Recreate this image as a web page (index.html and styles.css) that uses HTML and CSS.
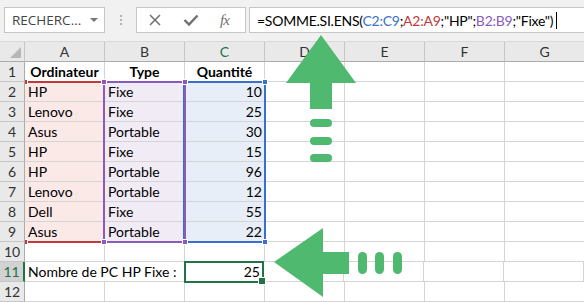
FILE: index.html
```html
<!DOCTYPE html>
<html lang="fr">
<head>
  <meta charset="UTF-8">
  <title>SOMME.SI.ENS</title>
  <link rel="stylesheet" href="styles.css">
</head>
<body>
  <div class="app">
    <div class="toolbar">
      <div class="name-box">
        <span class="name-text">RECHERC...</span>
        <span class="name-drop"></span>
      </div>
      <div class="grip"><i></i><i></i><i></i></div>
      <div class="fx-box">
        <svg class="fx-icon" width="14" height="14" viewBox="0 0 14 14">
          <path d="M2 2 L12 12 M12 2 L2 12" stroke="#707070" stroke-width="1.5" fill="none"/>
        </svg>
        <svg class="fx-icon" width="16" height="14" viewBox="0 0 16 14">
          <path d="M1.5 7 L6 11.5 L14.5 2.5" stroke="#707070" stroke-width="2.4" fill="none"/>
        </svg>
        <span class="fx-label">fx</span>
      </div>
      <div class="formula-box">
        <span class="formula">=SOMME.SI.ENS(<span class="ref-c-text">C2:C9</span>;<span class="ref-a-text">A2:A9</span>;"HP";<span class="ref-b-text">B2:B9</span>;"Fixe")</span><span class="caret"></span>
      </div>
    </div>

    <div class="sheet">
      <div class="row head">
        <div class="corner"><span class="corner-tri"></span></div>
        <div class="col-h">A</div>
        <div class="col-h">B</div>
        <div class="col-h active">C</div>
        <div class="col-h">D</div>
        <div class="col-h">E</div>
        <div class="col-h">F</div>
        <div class="col-h">G</div>
      </div>
      <div class="row">
        <div class="row-h">1</div>
        <div class="cell bold center">Ordinateur</div>
        <div class="cell bold center">Type</div>
        <div class="cell bold center">Quantité</div>
        <div class="cell"></div><div class="cell"></div><div class="cell"></div><div class="cell"></div>
      </div>
      <div class="row">
        <div class="row-h">2</div>
        <div class="cell ref-a">HP</div>
        <div class="cell ref-b">Fixe</div>
        <div class="cell ref-c num">10</div>
        <div class="cell"></div><div class="cell"></div><div class="cell"></div><div class="cell"></div>
      </div>
      <div class="row">
        <div class="row-h">3</div>
        <div class="cell ref-a">Lenovo</div>
        <div class="cell ref-b">Fixe</div>
        <div class="cell ref-c num">25</div>
        <div class="cell"></div><div class="cell"></div><div class="cell"></div><div class="cell"></div>
      </div>
      <div class="row">
        <div class="row-h">4</div>
        <div class="cell ref-a">Asus</div>
        <div class="cell ref-b">Portable</div>
        <div class="cell ref-c num">30</div>
        <div class="cell"></div><div class="cell"></div><div class="cell"></div><div class="cell"></div>
      </div>
      <div class="row">
        <div class="row-h">5</div>
        <div class="cell ref-a">HP</div>
        <div class="cell ref-b">Fixe</div>
        <div class="cell ref-c num">15</div>
        <div class="cell"></div><div class="cell"></div><div class="cell"></div><div class="cell"></div>
      </div>
      <div class="row">
        <div class="row-h">6</div>
        <div class="cell ref-a">HP</div>
        <div class="cell ref-b">Portable</div>
        <div class="cell ref-c num">96</div>
        <div class="cell"></div><div class="cell"></div><div class="cell"></div><div class="cell"></div>
      </div>
      <div class="row">
        <div class="row-h">7</div>
        <div class="cell ref-a">Lenovo</div>
        <div class="cell ref-b">Portable</div>
        <div class="cell ref-c num">12</div>
        <div class="cell"></div><div class="cell"></div><div class="cell"></div><div class="cell"></div>
      </div>
      <div class="row">
        <div class="row-h">8</div>
        <div class="cell ref-a">Dell</div>
        <div class="cell ref-b">Fixe</div>
        <div class="cell ref-c num">55</div>
        <div class="cell"></div><div class="cell"></div><div class="cell"></div><div class="cell"></div>
      </div>
      <div class="row">
        <div class="row-h">9</div>
        <div class="cell ref-a">Asus</div>
        <div class="cell ref-b">Portable</div>
        <div class="cell ref-c num">22</div>
        <div class="cell"></div><div class="cell"></div><div class="cell"></div><div class="cell"></div>
      </div>
      <div class="row">
        <div class="row-h">10</div>
        <div class="cell"></div><div class="cell"></div><div class="cell"></div><div class="cell"></div>
        <div class="cell"></div><div class="cell"></div><div class="cell"></div>
      </div>
      <div class="row">
        <div class="row-h active">11</div>
        <div class="cell wide">Nombre de PC HP Fixe :</div>
        <div class="cell num selected">25</div>
        <div class="cell"></div><div class="cell"></div><div class="cell"></div><div class="cell"></div>
      </div>
      <div class="row">
        <div class="row-h">12</div>
        <div class="cell"></div><div class="cell"></div><div class="cell"></div><div class="cell"></div>
        <div class="cell"></div><div class="cell"></div><div class="cell"></div>
      </div>

      <!-- formula reference frames -->
      <div class="range range-a"><i class="knob k-tl"></i><i class="knob k-bl"></i></div>
      <div class="range range-c"><i class="knob k-tr"></i><i class="knob k-br"></i></div>
      <div class="range range-b"><i class="knob k-tl"></i><i class="knob k-tr"></i><i class="knob k-bl"></i><i class="knob k-br"></i></div>
    </div>

    <svg class="arrows" width="584" height="302" viewBox="0 0 584 302">
      <polygon points="321,35 356,83 332,83 332,109 310,109 310,83 286,83"/>
      <rect x="310" y="119" width="22" height="8" rx="4"/>
      <rect x="310" y="137" width="22" height="8" rx="4"/>
      <rect x="310" y="154" width="22" height="8" rx="4"/>
      <polygon points="274,262 323,228 323,252 349,252 349,274 323,274 323,297"/>
      <rect x="358" y="252" width="9" height="22" rx="4.5"/>
      <rect x="375" y="252" width="9" height="22" rx="4.5"/>
      <rect x="393" y="252" width="9" height="22" rx="4.5"/>
    </svg>
  </div>
</body>
</html>
```

FILE: styles.css
```css
* {
  margin: 0;
  padding: 0;
  box-sizing: border-box;
}

:root {
  --grid: #d4d4d4;
  --head-bg: #e9e9e9;
  --head-active: #d2d2d2;
  --green: #217346;
  --ref-a: #c0393b;
  --ref-b: #8a5bbf;
  --ref-c: #3a6fcb;
}

body {
  font-family: 'Lato', 'Liberation Sans', sans-serif;
  font-size: 14px;
  color: #000;
  background: #fff;
  width: 584px;
  height: 302px;
  overflow: hidden;
}

.app {
  position: relative;
  width: 584px;
  height: 302px;
}

/* Formula bar */
.toolbar {
  height: 42px;
  background: #f1f1f1;
  display: flex;
  align-items: flex-start;
  padding: 7px 0 0 4px;
  border-bottom: 1px solid #d8d8d8;
}

.name-box {
  width: 101px;
  flex: 0 0 101px;
  height: 26px;
  background: #fff;
  border: 1px solid #c6c6c6;
  display: flex;
  align-items: center;
  justify-content: space-between;
  padding: 0 6px 0 7px;
}

.name-text {
  font-family: 'Open Sans', 'Liberation Sans', sans-serif;
  font-size: 13.5px;
  color: #444;
}

.name-drop {
  width: 0;
  height: 0;
  border-left: 4px solid transparent;
  border-right: 4px solid transparent;
  border-top: 4px solid #777;
}

.grip {
  width: 31px;
  flex: 0 0 31px;
  height: 26px;
  display: flex;
  flex-direction: column;
  align-items: center;
  justify-content: center;
  gap: 2px;
}

.grip i {
  display: block;
  width: 2px;
  height: 2px;
  background: #b4b4b4;
}

.fx-box {
  width: 110px;
  flex: 0 0 110px;
  height: 26px;
  background: #fff;
  border: 1px solid #c6c6c6;
  display: flex;
  align-items: center;
  gap: 21px;
  padding-left: 11px;
}

.fx-label {
  font-family: 'Liberation Serif', serif;
  font-style: italic;
  font-size: 15px;
  color: #707070;
  letter-spacing: -1px;
}

.formula-box {
  flex: 1;
  height: 26px;
  margin-left: 3px;
  background: #fff;
  border: 1px solid #c6c6c6;
  border-right: none;
  display: flex;
  align-items: center;
  padding-left: 7px;
  white-space: nowrap;
  font-size: 14px;
  letter-spacing: -0.25px;
}

.ref-a-text { color: var(--ref-a); }
.ref-b-text { color: var(--ref-b); }
.ref-c-text { color: var(--ref-c); }

.caret {
  display: inline-block;
  width: 1px;
  height: 17px;
  background: #000;
  margin-left: 3px;
}

/* Grid */
.sheet {
  position: relative;
}

.row {
  display: flex;
  height: 20px;
}

.row.head .col-h,
.row.head .corner {
  height: 20px;
  background: var(--head-bg);
  border-bottom: 1px solid #ababab;
}

.corner {
  width: 25px;
  flex: 0 0 25px;
  border-right: 1px solid #c6c6c6;
  position: relative;
}

.corner-tri {
  position: absolute;
  right: 3px;
  bottom: 3px;
  width: 0;
  height: 0;
  border-left: 11px solid transparent;
  border-bottom: 11px solid #b7b7b7;
}

.col-h {
  width: 80px;
  flex: 0 0 80px;
  border-right: 1px solid #c6c6c6;
  text-align: center;
  line-height: 20px;
  color: #333;
}

.col-h.active {
  background: var(--head-active);
  border-bottom: 2px solid var(--green);
  color: var(--green);
}

.row-h {
  width: 25px;
  flex: 0 0 25px;
  background: var(--head-bg);
  border-right: 1px solid #ababab;
  border-bottom: 1px solid #c6c6c6;
  text-align: center;
  line-height: 20px;
  color: #333;
}

.row-h.active {
  background: var(--head-active);
  border-right: 2px solid var(--green);
  color: var(--green);
}

.cell {
  width: 80px;
  flex: 0 0 80px;
  border-right: 1px solid var(--grid);
  border-bottom: 1px solid var(--grid);
  line-height: 20px;
  padding: 0 3px;
  white-space: nowrap;
}

.cell.wide {
  width: 160px;
  flex: 0 0 160px;
}

.bold { font-weight: 700; }
.center { text-align: center; }
.num { text-align: right; padding-right: 2px; }

.ref-a { background: #fbe9e8; }
.ref-b { background: #f1ebf6; }
.ref-c { background: #e8eef8; }

.cell.selected {
  position: relative;
  border: 2px solid var(--green);
  margin-left: -1px;
  margin-top: -1px;
  height: 22px;
  line-height: 18px;
}

.cell.selected::after {
  content: '';
  position: absolute;
  right: -4px;
  bottom: -4px;
  width: 6px;
  height: 6px;
  background: var(--green);
  border: 1px solid #fff;
}

/* Reference frames drawn over the cells */
.range {
  position: absolute;
  top: 39px;
  height: 162px;
}

.range-a {
  left: 25px;
  width: 80px;
  border-top: 2px solid var(--ref-a);
  border-bottom: 2px solid var(--ref-a);
}

.range-b {
  left: 103px;
  width: 83px;
  border: 2px solid var(--ref-b);
}

.range-c {
  left: 183px;
  width: 83px;
  border: 2px solid var(--ref-c);
}

.knob {
  position: absolute;
  width: 6px;
  height: 6px;
  border: 1px solid #fff;
}

.range-a .knob { background: var(--ref-a); }
.range-b .knob { background: var(--ref-b); }
.range-c .knob { background: var(--ref-c); }

.k-tl { left: -4px; top: -4px; }
.k-tr { right: -4px; top: -4px; }
.k-bl { left: -4px; bottom: -4px; }
.k-br { right: -4px; bottom: -4px; }

/* left knobs of column A are cut by the row headers */
.range-a .knob {
  left: 0;
  width: 3px;
  border-left: none;
}

.arrows {
  position: absolute;
  left: 0;
  top: 0;
  fill: #4fb96f;
  pointer-events: none;
}
```
